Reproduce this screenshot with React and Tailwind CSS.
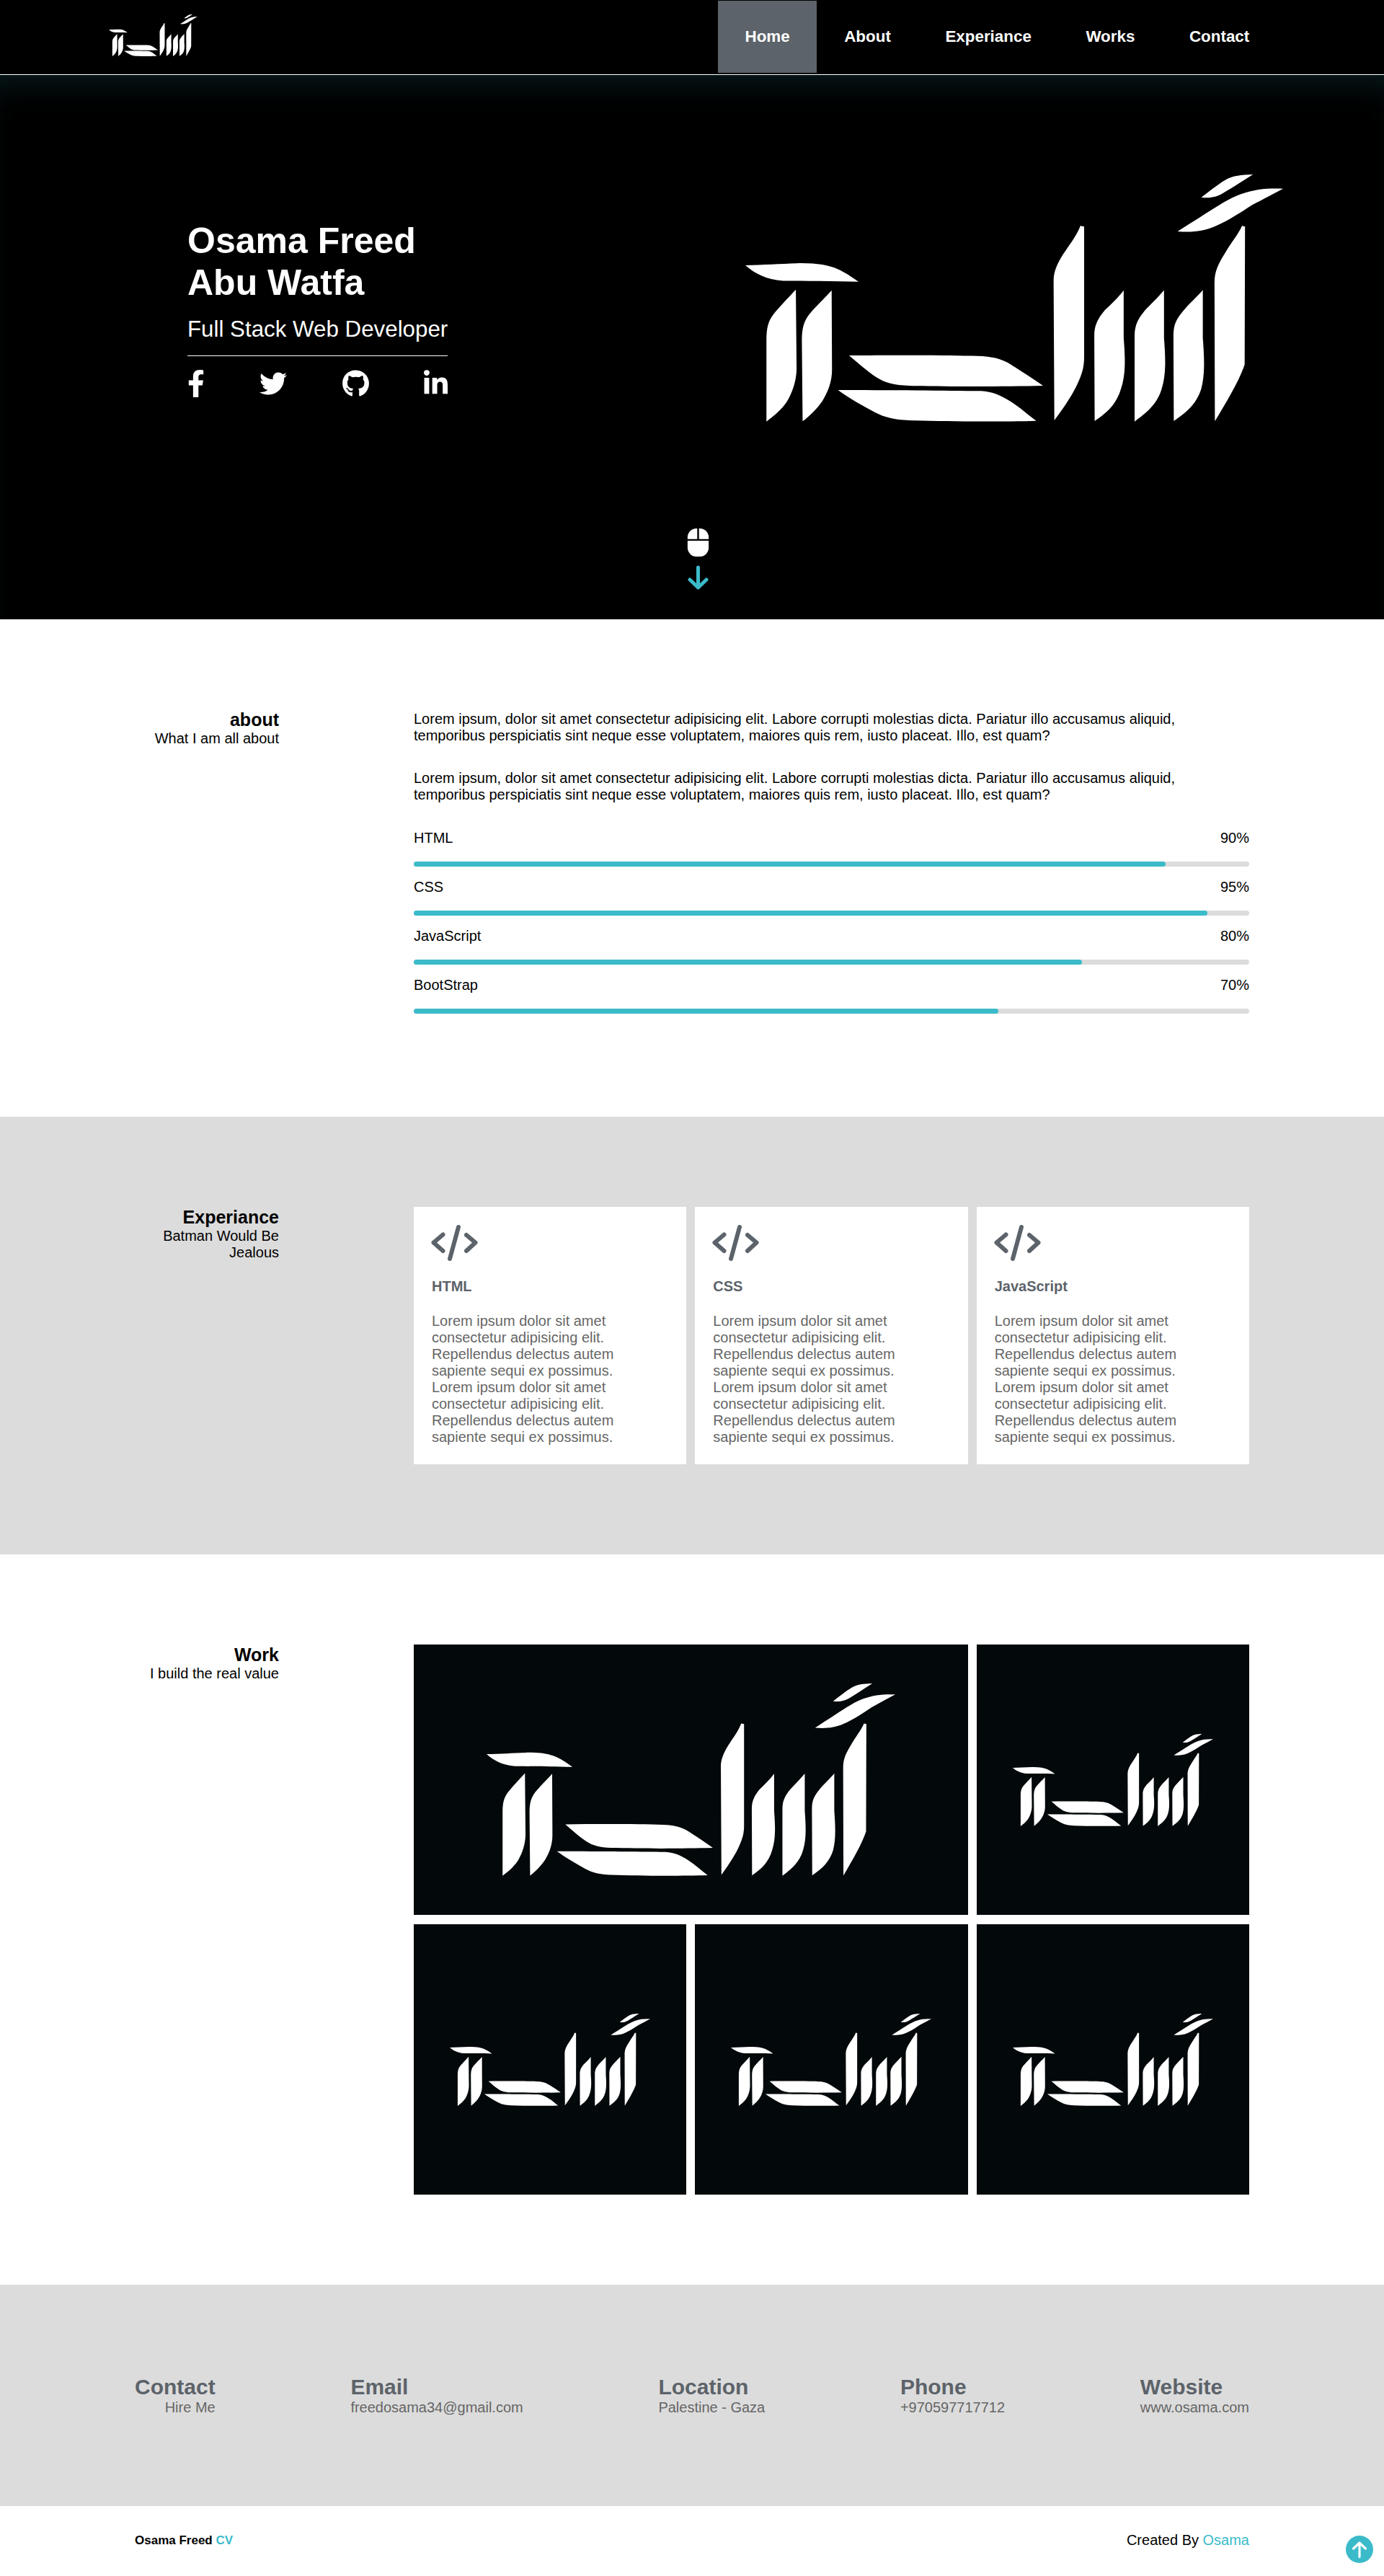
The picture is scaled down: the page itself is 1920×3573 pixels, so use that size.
import React from 'react';
import { FaFacebookF, FaTwitter, FaGithub, FaLinkedinIn, FaMouse } from 'react-icons/fa';

const navItems = ['Home', 'About', 'Experiance', 'Works', 'Contact'];

const skills = [
  { name: 'HTML', value: 90 },
  { name: 'CSS', value: 95 },
  { name: 'JavaScript', value: 80 },
  { name: 'BootStrap', value: 70 },
];

const lorem =
  'Lorem ipsum, dolor sit amet consectetur adipisicing elit. Labore corrupti molestias dicta. Pariatur illo accusamus aliquid, temporibus perspiciatis sint neque esse voluptatem, maiores quis rem, iusto placeat. Illo, est quam?';

const cardText =
  'Lorem ipsum dolor sit amet consectetur adipisicing elit. Repellendus delectus autem sapiente sequi ex possimus. Lorem ipsum dolor sit amet consectetur adipisicing elit. Repellendus delectus autem sapiente sequi ex possimus.';

const contacts = [
  { title: 'Contact', text: 'Hire Me', right: true },
  { title: 'Email', text: 'freedosama34@gmail.com' },
  { title: 'Location', text: 'Palestine - Gaza' },
  { title: 'Phone', text: '+970597717712' },
  { title: 'Website', text: 'www.osama.com' },
];

function Logo({ className }) {
  return (
    <svg className={className} viewBox="65 68 1427 1030" preserveAspectRatio="none" fill="#fff">
      <path d="M1412 68C1380 70 1360 72 1340 90C1320 108 1295 140 1275 163C1300 168 1315 160 1330 148C1355 125 1385 95 1412 68Z" />
      <path d="M1492 127C1450 125 1420 128 1380 150C1340 172 1300 220 1212 305C1250 310 1280 305 1310 285C1350 258 1380 225 1410 195C1440 170 1465 150 1492 127Z" />
      <path d="M1383 282L1391 285L1390 860C1375 930 1340 1020 1311 1096L1310 520C1310 470 1320 440 1340 390C1355 350 1372 320 1383 282Z" />
      <path d="M1279 549L1279 750C1283 830 1285 900 1275 960C1262 1025 1235 1060 1202 1095L1201 740C1201 690 1210 670 1225 640C1240 610 1265 575 1279 549Z" />
      <path d="M1176 550L1176 750C1180 830 1182 900 1170 960C1158 1025 1130 1060 1098 1097L1098 740C1098 690 1110 665 1125 635C1140 610 1160 580 1176 550Z" />
      <path d="M1069 551L1069 750C1073 830 1075 900 1062 960C1050 1025 1025 1060 992 1095L991 740C991 690 1003 665 1018 635C1035 610 1055 580 1069 551Z" />
      <path d="M954 282L964 285L964 830C964 880 955 910 945 945C930 995 905 1050 885 1092L883 510C883 470 895 430 915 385C930 350 945 320 954 282Z" />
      <path d="M340 822C450 820 600 820 680 824C720 826 745 835 770 860C800 890 830 920 855 948C750 952 600 952 500 948C460 946 435 935 415 915C390 890 365 855 340 822Z" />
      <path d="M311 966C420 966 600 968 690 970C720 972 745 990 770 1015C795 1040 815 1070 837 1094C750 1098 600 1098 500 1092C460 1090 435 1080 410 1060C375 1030 340 1000 311 966Z" />
      <path d="M294 551L295 880C295 930 285 970 270 1010C255 1045 235 1075 217 1096L215 760C215 710 220 680 235 650C250 620 275 585 294 551Z" />
      <path d="M199 548L201 880C200 930 190 975 175 1015C160 1050 140 1075 121 1097L121 760C121 710 125 680 140 650C155 620 180 580 199 548Z" />
      <path d="M65 446C110 445 160 440 200 438C250 436 285 445 310 462C330 476 350 497 365 515C300 512 220 512 165 511C120 505 90 480 65 446Z" />
    </svg>
  );
}

function CodeIcon() {
  return (
    <svg className="w-[66px] h-[52px] -ml-px -mt-px" viewBox="8 8 66 52" fill="none" stroke="#5c636a" strokeWidth="6" strokeLinecap="round" strokeLinejoin="round">
      <path d="M24.5 22.5L11.5 33.5L24.5 45M46 12L34 56M57 23L69.5 33.5L57 45" />
    </svg>
  );
}

function SectionTitle({ title, sub }) {
  return (
    <div className="text-right text-black">
      <h2 className="text-[25px] leading-[29px] font-bold">{title}</h2>
      <p className="text-[20px] leading-[23px]">{sub}</p>
    </div>
  );
}

export default function App() {
  return (
    <div className="relative font-['Liberation_Sans',Arial,sans-serif] text-black bg-white">
      {/* Navbar */}
      <header className="h-[104px] bg-black border-b border-white flex items-start justify-between pl-[151px] pr-[149px] pt-px">
        <Logo className="w-[123px] h-[58px] mt-[19px]" />
        <nav className="flex">
          {navItems.map((item, i) => (
            <a
              key={item}
              className={`h-[100px] px-[37.75px] flex items-center text-[22.4px] font-bold text-white ${i === 0 ? 'bg-[#5c636a]' : ''}`}
            >
              {item}
            </a>
          ))}
        </nav>
      </header>

      {/* Hero */}
      <section className="h-[755px] bg-black text-white flex flex-col shadow-[inset_0_35px_40px_-20px_rgba(20,70,75,0.35)]">
        <div className="h-[629px] flex items-start justify-between pl-[260px] pr-[140px]">
          <div className="w-[361px] pt-[202px]">
            <h1 className="text-[50px] leading-[57.5px] font-bold">Osama Freed Abu Watfa</h1>
            <p className="text-[31.3px] leading-[36px] mt-[18px] pb-[18px] border-b border-white whitespace-nowrap">Full Stack Web Developer</p>
            <div className="flex justify-between items-center mt-[19px]">
              <FaFacebookF className="w-[24px] h-[38px]" />
              <FaTwitter className="w-[38px] h-[38px]" />
              <FaGithub className="w-[37px] h-[38px]" />
              <FaLinkedinIn className="w-[33px] h-[38px]" />
            </div>
          </div>
          <Logo className="w-[746px] h-[343px] mt-[138px]" />
        </div>
        <div className="flex flex-col items-center gap-[12px] ml-[17px]">
          <FaMouse className="text-[39px]" />
          <svg className="w-[29px] h-[34px]" viewBox="0 0 29 34" fill="none" stroke="#3bbbca" strokeWidth="5" strokeLinecap="round" strokeLinejoin="round">
            <path d="M14.5 3V31M3 20L14.5 31L26 20" />
          </svg>
        </div>
      </section>

      {/* About */}
      <section className="h-[690px] px-[187px] pt-[125px] grid grid-cols-[200px_1fr] gap-x-[187px]">
        <SectionTitle title="about" sub="What I am all about" />
        <div className="text-[20px] leading-[23px] pt-[2px]">
          <p className="pr-[30px]">{lorem}</p>
          <p className="pr-[30px] mt-[36px]">{lorem}</p>
          <div className="mt-[37px] flex flex-col gap-[17px]">
            {skills.map((s) => (
              <div key={s.name}>
                <div className="flex justify-between">
                  <span>{s.name}</span>
                  <span>{s.value}%</span>
                </div>
                <div className="mt-[21px] h-[7px] rounded-full bg-[#dcdcdc]">
                  <div className="h-full rounded-full bg-[#3bbbca]" style={{ width: `${s.value}%` }} />
                </div>
              </div>
            ))}
          </div>
        </div>
      </section>

      {/* Experiance */}
      <section className="h-[607px] bg-[#dcdcdc] px-[187px] pt-[125px] grid grid-cols-[200px_1fr] gap-x-[187px]">
        <SectionTitle title="Experiance" sub="Batman Would Be Jealous" />
        <div className="grid grid-cols-3 gap-[12px] h-[357px]">
          {['HTML', 'CSS', 'JavaScript'].map((t) => (
            <div key={t} className="bg-white p-[25px]">
              <CodeIcon />
              <h3 className="mt-[23px] text-[20px] leading-[23px] font-bold text-[#5c636a]">{t}</h3>
              <p className="mt-[25px] w-[290px] text-[20px] leading-[23px] text-[#666]">{cardText}</p>
            </div>
          ))}
        </div>
      </section>

      {/* Work */}
      <section className="h-[1013px] px-[187px] pt-[125px] grid grid-cols-[200px_1fr] gap-x-[187px]">
        <SectionTitle title="Work" sub="I build the real value" />
        <div className="grid grid-cols-3 grid-rows-[375px_375px] gap-x-[12px] gap-y-[13px] h-[763px]">
          <div className="col-span-2 bg-[#03080a] flex items-center justify-center">
            <Logo className="w-[567px] h-[267px]" />
          </div>
          {[0, 1, 2, 3].map((n) => (
            <div key={n} className="bg-[#03080a] flex items-center justify-center">
              <Logo className="w-[278px] h-[128px]" />
            </div>
          ))}
        </div>
      </section>

      {/* Contact */}
      <section className="h-[307px] bg-[#dcdcdc] px-[187px] pt-[125px] flex justify-between text-[#5c636a]">
        {contacts.map((c) => (
          <div key={c.title} className={c.right ? 'text-right' : ''}>
            <h4 className="text-[30px] leading-[34px] font-bold">{c.title}</h4>
            <p className="text-[20px] leading-[23px] text-[#666]">{c.text}</p>
          </div>
        ))}
      </section>

      {/* Footer */}
      <footer className="h-[97px] px-[187px] pt-[36px] flex justify-between items-start">
        <p className="text-[17px] leading-[24px] font-bold">
          Osama Freed <span className="text-[#3bbbca]">CV</span>
        </p>
        <p className="text-[20px] leading-[23px]">
          Created By <span className="text-[#3bbbca]">Osama</span>
        </p>
      </footer>

      {/* Back to top */}
      <svg className="absolute right-[15px] bottom-[18px] w-[38px] h-[38px]" viewBox="0 0 38 38" fill="none">
        <circle cx="19" cy="19" r="19" fill="#3bbbca" />
        <path d="M19 10V29.5M10.5 18L19 10L27.5 18" stroke="#fff" strokeWidth="3.2" strokeLinecap="round" strokeLinejoin="round" />
      </svg>
    </div>
  );
}
